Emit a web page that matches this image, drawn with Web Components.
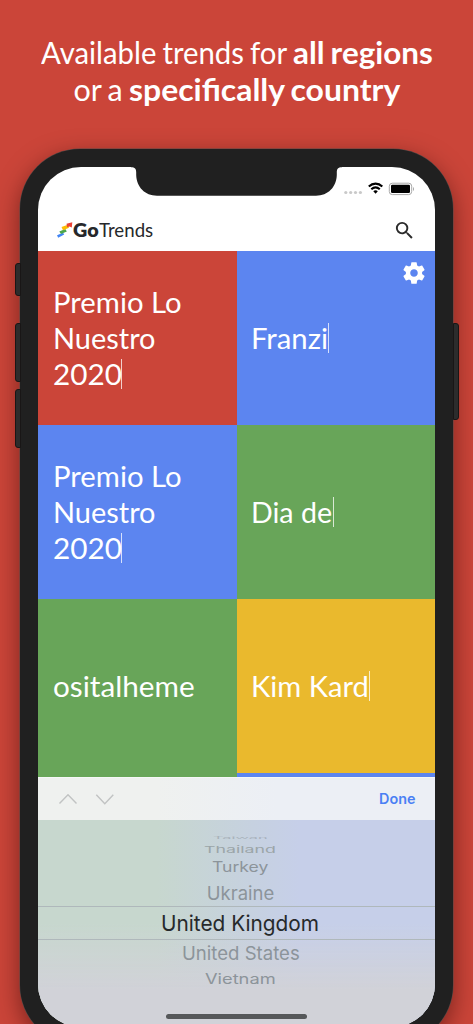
<!DOCTYPE html>
<html lang="en">
<head>
<meta charset="utf-8">
<title>GoTrends</title>
<style>
  body {
    margin: 0;
    height: 1024px;
    overflow: hidden;
    background: #cb4539;
    font-family: Inter, "Liberation Sans", sans-serif;
    --brand-font: Lato, Inter, sans-serif;
  }
</style>
</head>
<body>
<promo-page>
  <promo-headline slot="headline"></promo-headline>
  <phone-frame>
    <status-bar></status-bar>
    <app-header></app-header>
    <trend-grid>
      <div slot="left">
        <trend-tile color="red" caret><fit-text width="129">Premio Lo</fit-text><fit-text width="103">Nuestro</fit-text><fit-text width="68.5">2020</fit-text></trend-tile>
        <trend-tile color="blue" caret><fit-text width="129">Premio Lo</fit-text><fit-text width="103">Nuestro</fit-text><fit-text width="68.5">2020</fit-text></trend-tile>
        <trend-tile color="green"><fit-text width="142">ositalheme</fit-text></trend-tile>
      </div>
      <div slot="right">
        <trend-tile color="blue" caret><settings-button slot="action"></settings-button><fit-text width="76.5">Franzi</fit-text></trend-tile>
        <trend-tile color="green" caret><fit-text width="81.5">Dia de</fit-text></trend-tile>
        <trend-tile color="yellow" caret><fit-text width="117.5">Kim Kard</fit-text></trend-tile>
      </div>
    </trend-grid>
    <picker-toolbar></picker-toolbar>
    <country-picker></country-picker>
  </phone-frame>
</promo-page>

<script>
function attach(el, html) {
  el.attachShadow({ mode: 'open' }).innerHTML = html;
}

/* A single line of text stretched or squeezed to the given width */
class FitText extends HTMLElement {
  connectedCallback() {
    attach(this, `
      <style>
        :host { display: block; white-space: nowrap; }
        span { display: inline-block; transform-origin: 0 50%; }
      </style>
      <span><slot></slot></span>
    `);
    const span = this.shadowRoot.querySelector('span');
    const width = parseFloat(this.getAttribute('width'));
    const tall = this.getAttribute('tall') || 1;
    this.style.width = width + 'px';
    span.style.transform = `scale(${width / span.offsetWidth}, ${tall})`;
  }
}

class PromoPage extends HTMLElement {
  constructor() {
    super();
    attach(this, `
      <style>
        :host {
          display: flex;
          flex-direction: column;
          align-items: center;
          width: 473px;
          height: 1024px;
          overflow: hidden;
        }
      </style>
      <slot name="headline"></slot>
      <slot></slot>
    `);
  }
}

class PromoHeadline extends HTMLElement {
  constructor() {
    super();
    attach(this, `
      <style>
        :host {
          display: block;
          flex: none;
          box-sizing: border-box;
          height: 149px;
          padding-top: 34px;
          color: #fff;
          font-family: var(--brand-font);
          font-size: 30.5px;
          font-weight: 400;
          line-height: 37px;
          word-spacing: -1.5px;
        }
        div { display: flex; justify-content: center; gap: 6px; }
        .bold { font-weight: 700; }
      </style>
      <div><fit-text width="246">Available trends for</fit-text><fit-text class="bold" width="140">all regions</fit-text></div>
      <div><fit-text width="49">or a</fit-text><fit-text class="bold" width="271">specifically country</fit-text></div>
    `);
  }
}

class PhoneFrame extends HTMLElement {
  constructor() {
    super();
    attach(this, `
      <style>
        :host {
          display: block;
          position: relative;
          flex: none;
          box-sizing: border-box;
          width: 433px;
          height: 896px;
          padding: 18px;
          border-radius: 60px;
          background: #202020;
          box-shadow: 0 0 0 .5px #5b4a48, 0 8px 24px rgba(40, 0, 0, .5);
        }
        .screen {
          display: flex;
          flex-direction: column;
          height: 860px;
          border-radius: 43px;
          overflow: hidden;
          background: #fff;
        }
        .notch { position: absolute; left: 111px; top: 17px; }
        .key {
          position: absolute;
          box-sizing: border-box;
          width: 6px;
          border: 1px solid #191616;
          background: #2c2c2c;
        }
        .left { left: -5.5px; border-radius: 3px 0 0 3px; }
        .right { right: -5.5px; border-radius: 0 3px 3px 0; }
      </style>
      <i class="key left" style="top:114px;height:33px"></i>
      <i class="key left" style="top:174px;height:59px"></i>
      <i class="key left" style="top:240px;height:59px"></i>
      <i class="key right" style="top:174px;height:97px"></i>
      <div class="screen"><slot></slot></div>
      <svg class="notch" width="211" height="31" viewBox="0 0 211 31">
        <path fill="#202020" d="M0 0V1.3C4 1.3 5.2 2.8 5.2 6.5V9C5.5 21 14 29.7 26 29.7H185C197 29.7 205.5 21 205.8 9V6.5C205.8 2.8 207 1.3 211 1.3V0Z"/>
      </svg>
    `);
  }
}

class StatusBar extends HTMLElement {
  constructor() {
    super();
    attach(this, `
      <style>
        :host {
          display: flex;
          flex: none;
          justify-content: flex-end;
          box-sizing: border-box;
          height: 42px;
          padding: 14px 20px 0 0;
        }
      </style>
      <svg width="72" height="16" viewBox="0 0 72 16">
        <g fill="#c9c9c9"><circle cx="2.8" cy="11.5" r="1.6"/><circle cx="7.7" cy="11.5" r="1.6"/><circle cx="12.5" cy="11.5" r="1.6"/><circle cx="17.4" cy="11.5" r="1.6"/></g>
        <g fill="none" stroke="#000" stroke-width="2.1">
          <path d="M25.8 5.5C29.8 1.7 35.3 1.7 39.3 5.5"/>
          <path d="M28.3 8.3C30.9 5.9 34.2 5.9 36.8 8.3"/>
        </g>
        <path d="M30.3 10.2C31.7 9 33.4 9 34.8 10.2L32.55 12.7Z"/>
        <rect x="46.3" y="2.2" width="22.4" height="11.4" rx="3" fill="#fff" stroke="#a8a8a8"/>
        <rect x="48" y="3.8" width="19" height="8.2" rx="1.2"/>
        <path fill="#a0a0a0" d="M70 6V10C71.3 9.4 71.3 6.6 70 6Z"/>
      </svg>
    `);
  }
}

class AppHeader extends HTMLElement {
  constructor() {
    super();
    attach(this, `
      <style>
        :host {
          display: flex;
          flex: none;
          align-items: center;
          box-sizing: border-box;
          height: 42px;
          padding: 0 19.5px 0 19px;
          color: #26282b;
          font-family: var(--brand-font);
          font-size: 19px;
          line-height: 22px;
        }
        .go { font-weight: 800; }
        .search { margin-left: auto; }
      </style>
      <svg width="16" height="18" viewBox="0 0 16 18">
        <path fill="#4285f4" d="M0 14.2L6 11.7L7.2 13.6L1.2 16.7Z"/>
        <path fill="#4ca64c" d="M2.3 10.5L8.3 8L9.8 10.6L4 13Z"/>
        <path fill="#fbbc05" d="M4.5 6L10.8 3.8L12 6.8L6 9.3Z"/>
        <path fill="#ea4335" d="M9.5 2.8L15.3 1.2L14.8 6.6L12.4 5.4L10.2 6.3Z"/>
      </svg>
      <fit-text class="go" width="26">Go</fit-text>
      <fit-text width="54">Trends</fit-text>
      <svg class="search" width="23" height="23" viewBox="0 0 24 24" fill="#2b2b2b">
        <path d="M15.5 14h-.79l-.28-.27A6.471 6.471 0 0 0 16 9.5 6.5 6.5 0 1 0 9.5 16c1.61 0 3.09-.59 4.23-1.57l.27.28v.79l5 4.99L20.49 19l-4.99-5zm-6 0C7.01 14 5 11.99 5 9.5S7.01 5 9.5 5 14 7.01 14 9.5 11.99 14 9.5 14z"/>
      </svg>
    `);
  }
}

class TrendGrid extends HTMLElement {
  constructor() {
    super();
    attach(this, `
      <style>
        :host {
          display: grid;
          flex: none;
          grid-template-columns: 198.5px 1fr;
          height: 526px;
          overflow: hidden;
          background: #5c85f0;
        }
        ::slotted([slot="left"]) { background: #68a559; }
      </style>
      <slot name="left"></slot>
      <slot name="right"></slot>
    `);
  }
}

class TrendTile extends HTMLElement {
  constructor() {
    super();
    attach(this, `
      <style>
        :host {
          display: flex;
          flex-direction: column;
          justify-content: center;
          position: relative;
          box-sizing: border-box;
          height: 174px;
          padding-left: 14.5px;
          color: #fff;
          font-family: var(--brand-font);
          font-size: 29.5px;
          line-height: 36.3px;
        }
        :host([color="red"]) { background: #cb4539; }
        :host([color="blue"]) { background: #5c85f0; }
        :host([color="green"]) { background: #68a559; }
        :host([color="yellow"]) { background: #eab92d; }
        ::slotted([slot="action"]) { position: absolute; top: 8.5px; right: 8px; }
        :host([caret]) ::slotted(fit-text:last-child) {
          border-right: 1.5px solid rgba(255, 255, 255, .75);
          height: 30px;
          line-height: 30px;
          margin: 3px 0;
        }
      </style>
      <slot name="action"></slot>
      <slot></slot>
    `);
  }
}

class SettingsButton extends HTMLElement {
  constructor() {
    super();
    attach(this, `
      <style>
        :host { display: block; width: 26px; height: 26px; }
        svg { display: block; }
      </style>
      <svg width="26" height="26" viewBox="0 0 24 24" fill="#fff">
        <path d="M19.43 12.98c.04-.32.07-.64.07-.98s-.03-.66-.07-.98l2.11-1.65c.19-.15.24-.42.12-.64l-2-3.46c-.12-.22-.39-.3-.61-.22l-2.49 1c-.52-.4-1.08-.73-1.69-.98l-.38-2.65C14.46 2.18 14.25 2 14 2h-4c-.25 0-.46.18-.49.42l-.38 2.65c-.61.25-1.17.59-1.69.98l-2.49-1c-.23-.09-.49 0-.61.22l-2 3.46c-.13.22-.07.49.12.64l2.11 1.65c-.04.32-.07.65-.07.98s.03.66.07.98l-2.11 1.65c-.19.15-.24.42-.12.64l2 3.46c.12.22.39.3.61.22l2.49-1c.52.4 1.08.73 1.69.98l.38 2.65c.03.24.24.42.49.42h4c.25 0 .46-.18.49-.42l.38-2.65c.61-.25 1.17-.59 1.69-.98l2.49 1c.23.09.49 0 .61-.22l2-3.46c.12-.22.07-.49-.12-.64l-2.11-1.65zM12 15.5c-1.93 0-3.5-1.57-3.5-3.5s1.57-3.5 3.5-3.5 3.5 1.57 3.5 3.5-1.57 3.5-3.5 3.5z"/>
      </svg>
    `);
  }
}

class PickerToolbar extends HTMLElement {
  constructor() {
    super();
    attach(this, `
      <style>
        :host {
          display: flex;
          flex: none;
          align-items: center;
          justify-content: space-between;
          box-sizing: border-box;
          height: 42.5px;
          padding: 0 19.5px 0 20px;
          border-top: 1px solid #f5f7f6;
          background: linear-gradient(90deg, #eff1ef 30%, #eceff5 60%);
          color: #4a80f4;
          font-size: 14.2px;
          font-weight: 600;
          line-height: 20px;
        }
      </style>
      <svg width="58" height="14" viewBox="0 0 58 14" fill="none" stroke="#c1c3c3" stroke-width="1.4">
        <path d="M1.5 11.5L10 2.7L18.5 11.5M38.3 2.7L46.8 11.7L55.3 2.7"/>
      </svg>
      <fit-text width="36.5">Done</fit-text>
    `);
  }
}

class CountryPicker extends HTMLElement {
  constructor() {
    super();
    attach(this, `
      <style>
        :host {
          display: flex;
          flex: 1;
          flex-direction: column;
          align-items: center;
          box-sizing: border-box;
          padding: 16.9px 0 8.5px;
          background:
            linear-gradient(180deg, rgba(209, 210, 216, 0) 50%, #d1d2d8 82%),
            linear-gradient(90deg, #c7d7ce 30%, #c6d1e0 54%, #c6cfe9 66%);
          color: #8c949a;
          font-size: 18.5px;
        }
        /* the wheel sits a little right of the screen's centre */
        .row {
          display: flex;
          align-self: stretch;
          align-items: center;
          justify-content: center;
          box-sizing: border-box;
          padding-left: 7.5px;
          line-height: 24px;
        }
        .row.selected {
          border: solid #afb8bb;
          border-width: 1px 0;
          color: #26292b;
          font-size: 22px;
        }
        .edge { overflow: hidden; opacity: .5; }
        .far { color: #9ba5a8; }
        .home { width: 141px; height: 5px; margin-top: auto; border-radius: 3px; background: #56585a; }
      </style>
      <div class="row edge" style="height:4px;margin-bottom:4px;font-size:16px"><fit-text width="55" tall=".22">Taiwan</fit-text></div>
      <div class="row far" style="height:9.6px"><fit-text width="72" tall=".51">Thailand</fit-text></div>
      <div class="row" style="height:26px"><fit-text width="56" tall=".76">Turkey</fit-text></div>
      <div class="row" style="height:26px"><fit-text width="67">Ukraine</fit-text></div>
      <div class="row selected" style="height:34px"><fit-text width="158">United Kingdom</fit-text></div>
      <div class="row" style="height:26.6px"><fit-text width="117.5">United States</fit-text></div>
      <div class="row" style="height:24.8px"><fit-text width="71" tall=".76">Vietnam</fit-text></div>
      <div class="home"></div>
    `);
  }
}

customElements.define('promo-page', PromoPage);
customElements.define('phone-frame', PhoneFrame);
customElements.define('status-bar', StatusBar);
customElements.define('app-header', AppHeader);
customElements.define('trend-grid', TrendGrid);
customElements.define('trend-tile', TrendTile);
customElements.define('settings-button', SettingsButton);
customElements.define('picker-toolbar', PickerToolbar);
customElements.define('country-picker', CountryPicker);
customElements.define('promo-headline', PromoHeadline);
// Measures its text, so it comes after the elements that style it
customElements.define('fit-text', FitText);
</script>
</body>
</html>
